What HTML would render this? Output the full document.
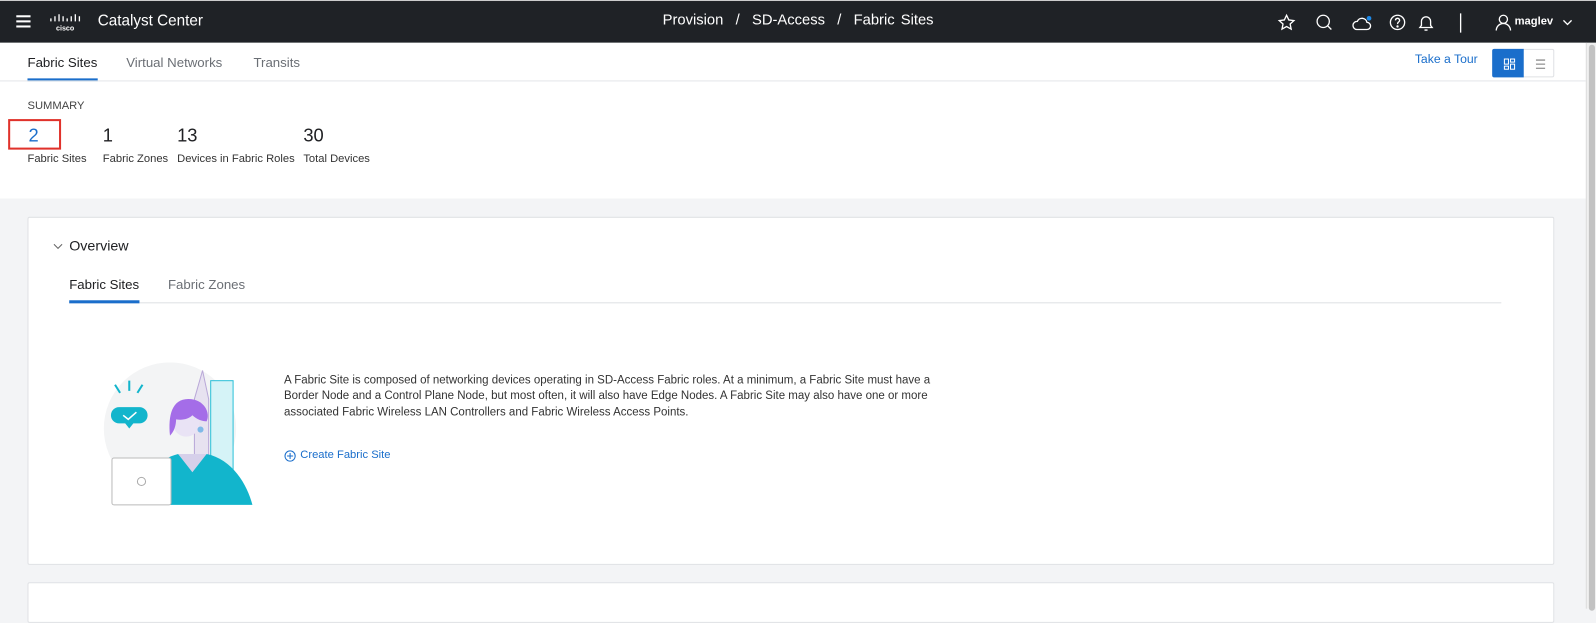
<!DOCTYPE html>
<html><head><style>
*{margin:0;padding:0;box-sizing:border-box}
body{width:1596px;height:598px;overflow:hidden;font-family:"Liberation Sans",sans-serif;background:#f3f4f6;position:relative;color:#202124}
#w{position:absolute;left:0;top:0;width:1568px;height:588px;transform:scale(1.01786);transform-origin:0 0}
.hdr{position:absolute;left:0;top:0;width:1568px;height:42px;background:#1f2226;border-top:1px solid #ccc;color:#fff}
.a{position:absolute}
.top{position:absolute;left:0;top:42px;width:1558px;height:153px;background:#fff}
.sb{position:absolute;left:1558px;top:42px;width:10px;height:556px;background:#f0f0f0;border-left:1px solid #ddd}
.sb div{position:absolute;left:2px;top:2px;width:6px;height:556px;background:#c2c2c2;border-radius:3px}
.card{position:absolute;left:27px;width:1500px;background:#fff;border:1px solid #e0e2e5;border-radius:2px}
</style></head><body><div id="w">
<div class="hdr">
 <div class="a" style="left:16px;top:14px;width:14px;height:2px;background:#fff;box-shadow:0 5px 0 #fff,0 10px 0 #fff"></div>
 <svg class="a" style="left:48px;top:12px" width="32" height="18" viewBox="0 0 32 18"><g stroke="#fff" stroke-width="1.3"><line x1="2" y1="5" x2="2" y2="8"/><line x1="6" y1="3" x2="6" y2="8"/><line x1="10" y1="1" x2="10" y2="8"/><line x1="14" y1="3" x2="14" y2="8"/><line x1="18" y1="5" x2="18" y2="8"/><line x1="22" y1="3" x2="22" y2="8"/><line x1="26" y1="1" x2="26" y2="8"/><line x1="30" y1="3" x2="30" y2="8"/></g><text x="16" y="17" fill="#fff" font-size="7" font-weight="bold" text-anchor="middle" font-family="Liberation Sans">cisco</text></svg>
 <div class="a" style="left:96px;top:11px;font-size:15px">Catalyst Center</div>
 <div class="a" style="left:651px;top:11px;font-size:14.5px;word-spacing:2px">Provision &nbsp;/&nbsp; SD-Access &nbsp;/&nbsp; Fabric Sites</div>
 <svg class="a" style="left:1255px;top:12px" width="300" height="20" viewBox="0 0 300 20" fill="none" stroke="#fff" stroke-width="1.3">
  <path d="M9 2l2.2 4.6 5 .6-3.7 3.4 1 5-4.5-2.5-4.5 2.5 1-5L1.8 7.2l5-.6z"/>
  <circle cx="45" cy="8" r="6"/><line x1="49.5" y1="12.5" x2="53" y2="16"/>
  <path d="M78 16h10a3.5 3.5 0 0 0 0-7 5 5 0 0 0-9.5-1A4 4 0 0 0 78 16z"/><circle cx="90" cy="5" r="2.3" fill="#1e88e5" stroke="none"/>
  <circle cx="118" cy="9" r="7"/><path d="M116 7a2 2 0 1 1 3 1.7c-.8.5-1 1-1 2"/><circle cx="118" cy="13" r=".5" fill="#fff"/>
  <path d="M140 14h12l-1.5-2V8a4.5 4.5 0 0 0-9 0v4z"/><path d="M144.5 16.5h3"/>
  <line x1="180" y1="0" x2="180" y2="19"/>
  <circle cx="222" cy="6" r="4"/><path d="M215 17a7 7 0 0 1 14 0"/>
  <path d="M281 7l4 4 4-4"/>
 </svg>
 <div class="a" style="left:1488px;top:14px;font-size:11px;font-weight:bold">maglev</div>
</div>
<div class="top">
 <div class="a" style="left:27px;top:12px;font-size:13px;color:#202124">Fabric Sites</div>
 <div class="a" style="left:27px;top:35px;width:69px;height:3px;background:#1a6ecb"></div>
 <div class="a" style="left:124px;top:12px;font-size:13px;color:#6b6f75">Virtual Networks</div>
 <div class="a" style="left:249px;top:12px;font-size:13px;color:#6b6f75">Transits</div>
 <div class="a" style="left:0;top:37px;width:1558px;height:1px;background:#e4e6e9"></div>
 <div class="a" style="left:1390px;top:9px;font-size:12px;color:#1a6ecb">Take a Tour</div>
 <div class="a" style="left:1466px;top:6px;width:61px;height:28px;border:1px solid #dfe1e4;border-radius:2px;background:#fff">
  <div class="a" style="left:-1px;top:-1px;width:31px;height:28px;background:#1a6ecb;border-radius:2px 0 0 2px"></div>
  <svg class="a" style="left:10px;top:8px" width="12" height="12" fill="none" stroke="#fff" stroke-width="1"><rect x="1" y="1" width="4" height="5"/><rect x="7" y="1" width="4" height="3"/><rect x="1" y="8" width="4" height="3"/><rect x="7" y="6" width="4" height="5"/></svg>
  <svg class="a" style="left:40px;top:9px" width="12" height="10" stroke="#777" stroke-width="1"><line x1="2" y1="1" x2="11" y2="1"/><line x1="2" y1="5" x2="11" y2="5"/><line x1="2" y1="9" x2="11" y2="9"/></svg>
 </div>
 <div class="a" style="left:27px;top:56px;font-size:11px;color:#444">SUMMARY</div>
 <div class="a" style="left:8px;top:75px;width:52px;height:30px;border:2px solid #e0322b"></div>
 <div class="a" style="left:28px;top:81px;font-size:18px;color:#1a6ecb">2</div>
 <div class="a" style="left:101px;top:81px;font-size:18px">1</div>
 <div class="a" style="left:174px;top:81px;font-size:18px">13</div>
 <div class="a" style="left:298px;top:81px;font-size:18px">30</div>
 <div class="a" style="left:27px;top:108px;font-size:11px;color:#333">Fabric Sites</div>
 <div class="a" style="left:101px;top:108px;font-size:11px;color:#333">Fabric Zones</div>
 <div class="a" style="left:174px;top:108px;font-size:11px;color:#333">Devices in Fabric Roles</div>
 <div class="a" style="left:298px;top:108px;font-size:11px;color:#333">Total Devices</div>
</div>
<div class="card" style="top:213px;height:342px">
 <svg class="a" style="left:24px;top:24px" width="10" height="8" fill="none" stroke="#666"><path d="M1 2l4 4 4-4"/></svg>
 <div class="a" style="left:40px;top:19px;font-size:14px">Overview</div>
 <div class="a" style="left:40px;top:58px;font-size:13px">Fabric Sites</div>
 <div class="a" style="left:137px;top:58px;font-size:13px;color:#6b6f75">Fabric Zones</div>
 <div class="a" style="left:40px;top:83px;width:1407px;height:1px;background:#dfe1e4"></div>
 <div class="a" style="left:40px;top:81px;width:69px;height:3px;background:#1a6ecb"></div>
 <svg class="a" style="left:67px;top:142px" width="160" height="150" viewBox="0 0 160 150">
  <circle cx="72" cy="65" r="65" fill="#f3f4f5"/>
  <path d="M104 8l6 28v94h-14V36z" fill="#e7e2f0" stroke="#b9a8d8"/>
  <rect x="112" y="18" width="22" height="112" fill="#d5f3f7" stroke="#2cc0d8"/>
  <path d="M40 140c8-30 20-45 40-50l14 14 14-14c25 5 40 30 45 50z" fill="#12b5cc"/>
  <path d="M80 90l14 18 14-18z" fill="#d6d0ea"/>
  <circle cx="88" cy="60" r="13" fill="#e9e3f5"/>
  <path d="M72 72c-2-20 2-36 18-36s22 14 18 22c-4 0-10-2-14-6-4 4-10 5-16 4 0 6-2 12-6 16z" fill="#a46de8"/>
  <circle cx="102" cy="66" r="3" fill="#7fb9e8"/>
  <path d="M14 52a8 8 0 0 1 8-8h20a8 8 0 0 1 8 8 8 8 0 0 1-8 8H36l-4 5-4-5h-6a8 8 0 0 1-8-8z" fill="#12b5cc"/>
  <path d="M26 52l5 4 8-7" stroke="#fff" stroke-width="1.5" fill="none"/>
  <g stroke="#12b5cc" stroke-width="2"><line x1="18" y1="22" x2="23" y2="30"/><line x1="32" y1="18" x2="32" y2="28"/><line x1="45" y1="22" x2="40" y2="30"/></g>
  <rect x="15" y="94" width="58" height="46" rx="2" fill="#fff" stroke="#bbb"/>
  <circle cx="44" cy="117" r="4" fill="none" stroke="#aaa"/>
 </svg>
 <div class="a" style="left:251px;top:153px;width:650px;font-size:11.3px;line-height:15.3px;color:#333">A Fabric Site is composed of networking devices operating in SD-Access Fabric roles. At a minimum, a Fabric Site must have a Border Node and a Control Plane Node, but most often, it will also have Edge Nodes. A Fabric Site may also have one or more associated Fabric Wireless LAN Controllers and Fabric Wireless Access Points.</div>
 <svg class="a" style="left:251px;top:228px" width="12" height="12" fill="none" stroke="#1a6ecb"><circle cx="6" cy="6" r="5"/><path d="M6 3v6M3 6h6"/></svg>
 <div class="a" style="left:267px;top:227px;font-size:11px;color:#1a6ecb">Create Fabric Site</div>
</div>
<div class="card" style="top:572px;height:40px"></div>
<div class="sb"><div></div></div>
</div></body></html>
